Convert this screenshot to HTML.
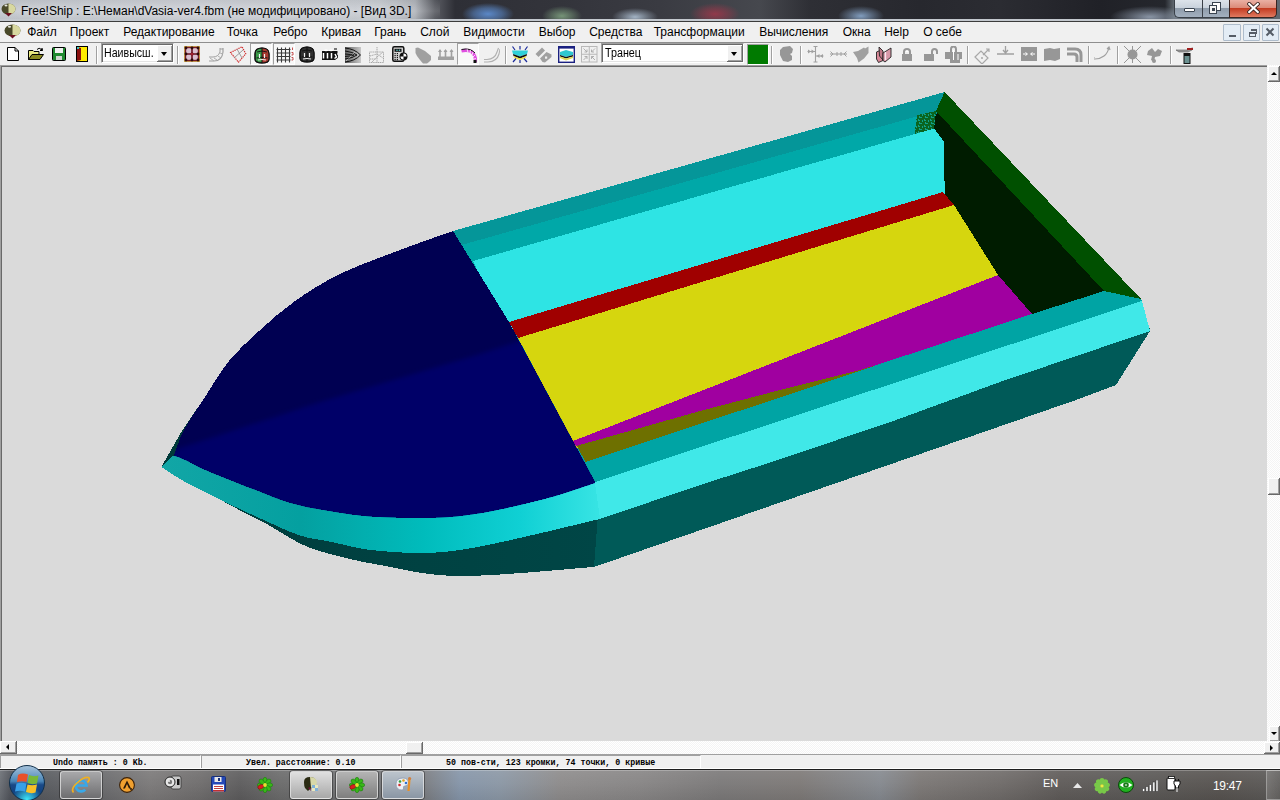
<!DOCTYPE html>
<html><head><meta charset="utf-8">
<style>
*{margin:0;padding:0;box-sizing:border-box}
html,body{width:1280px;height:800px;overflow:hidden;background:#f0f0f0;font-family:"Liberation Sans",sans-serif}
.a{position:absolute}
#title{left:0;top:0;width:1280px;height:22px;background:#2c2d34;overflow:hidden}
#menu{left:0;top:22px;width:1280px;height:21px;background:#f0f0f0;font-size:12px;color:#000}
#menu span{position:absolute;top:3px;white-space:nowrap}
#tb{left:0;top:43px;width:1280px;height:22px;background:#f0f0f0}
#view{left:0;top:65px;width:1267px;height:676px;background:#dadada;border-top:1px solid #a0a0a0;border-left:1px solid #a0a0a0;box-shadow:inset 1px 1px #696969}
#vs{left:1267px;top:65px;width:13px;height:676px;background:#f6f6f6}
#hs{left:0;top:741px;width:1280px;height:13px;background:#f6f6f6}
#status{left:0;top:754px;width:1280px;height:15px;background:#f0f0f0}
#status .p{position:absolute;top:1px;height:13px;border-top:1px solid #a0a0a0;border-left:1px solid #a0a0a0;border-right:1px solid #fff;font-family:"Liberation Mono",monospace;font-size:8.3px;font-weight:bold;color:#000;white-space:nowrap}
#task{left:0;top:769px;width:1280px;height:31px;background:#5e5e60}

</style></head><body>
<div id="title" class="a">
<div class="a" style="left:0;top:0;width:1280px;height:20px;background:linear-gradient(90deg,#c4c8cf 0px,#cdd0d6 200px,#c8ccd2 380px,#b0b4ba 415px,#5a5c63 435px,#2e2f36 455px,#33343b 560px,#3a3b42 660px,#46484e 760px,#2e2f35 810px,#27282e 920px,#2b2c32 1000px,#202127 1100px,#25272d 1165px,#606870 1174px)"></div>
<div class="a" style="left:0;top:0;width:440px;height:20px;background:linear-gradient(180deg,rgba(0,0,0,.05),rgba(255,255,255,.10) 55%,rgba(0,0,0,.04))"></div>
<div class="a" style="left:462px;top:3px;width:52px;height:22px;border-radius:45%;background:radial-gradient(closest-side,rgba(95,145,215,.9),rgba(95,145,215,.5) 55%,rgba(95,145,215,0))"></div>
<div class="a" style="left:542px;top:6px;width:40px;height:20px;border-radius:45%;background:radial-gradient(closest-side,rgba(140,180,140,.75),rgba(140,180,140,.35) 55%,rgba(140,180,140,0))"></div>
<div class="a" style="left:612px;top:8px;width:46px;height:18px;border-radius:45%;background:radial-gradient(closest-side,rgba(190,210,230,.8),rgba(190,210,230,.35) 55%,rgba(190,210,230,0))"></div>
<div class="a" style="left:690px;top:3px;width:50px;height:22px;border-radius:45%;background:radial-gradient(closest-side,rgba(165,55,75,.8),rgba(165,55,75,.4) 55%,rgba(165,55,75,0))"></div>
<div class="a" style="left:838px;top:6px;width:46px;height:20px;border-radius:45%;background:radial-gradient(closest-side,rgba(150,185,225,.8),rgba(150,185,225,.35) 55%,rgba(150,185,225,0))"></div>
<div class="a" style="left:1110px;top:6px;width:80px;height:22px;border-radius:50%;background:radial-gradient(closest-side,rgba(170,185,205,.75),rgba(170,185,205,0))"></div>
<div class="a" style="left:0;top:19px;width:1280px;height:2px;background:#c3c8ce"></div>
<div class="a" style="left:0;top:21px;width:1280px;height:1px;background:#3c3c3c"></div>
<svg class="a" style="left:1px;top:3px" width="15" height="14" viewBox="0 0 15 14"><ellipse cx="7.5" cy="6" rx="7" ry="5.5" fill="#4a4a2a"/><path d="M7.5 0.5 A7 5.5 0 0 1 7.5 11.5 Z" fill="#d8d8a0"/><path d="M4 10 L7.5 13.5 L11 10 Z" fill="#6a1020"/><ellipse cx="5" cy="2.5" rx="1.5" ry="1" fill="#e8e8e0"/></svg>
<div class="a" style="left:20.9px;top:4px;font-size:12px;color:#000;white-space:nowrap;letter-spacing:0px;text-shadow:0 0 8px rgba(255,255,255,.6)">Free!Ship<span style="margin-left:-3.5px">&nbsp; : </span>E:\Неман\dVasia-ver4.fbm (не модифицировано) - [Вид 3D.]</div>
<div class="a" style="left:1174px;top:0;width:28px;height:18px;border:1px solid #3a4048;border-top:none;border-right:none;border-radius:0 0 0 5px;background:linear-gradient(180deg,#dde3ea 0,#c9d2dc 45%,#8f9cab 50%,#a3b0bf 100%)"></div>
<div class="a" style="left:1202px;top:0;width:28px;height:18px;border:1px solid #3a4048;border-top:none;background:linear-gradient(180deg,#dde3ea 0,#c9d2dc 45%,#8f9cab 50%,#a3b0bf 100%)"></div>
<div class="a" style="left:1229px;top:0;width:48px;height:18px;border:1px solid #3a2420;border-top:none;border-radius:0 0 5px 0;background:linear-gradient(180deg,#eab0a4 0,#dc8a78 45%,#c43c22 50%,#e07a60 100%)"></div>
<div class="a" style="left:1184px;top:8px;width:11px;height:4px;background:#fff;border:1px solid #3a4450;border-radius:1px"></div>
<div class="a" style="left:1212px;top:2px;width:9px;height:9px;border:1px solid #3a4450;background:#fff"></div>
<div class="a" style="left:1209px;top:5px;width:8px;height:9px;border:1px solid #3a4450;background:#f4f4f4"></div>
<div class="a" style="left:1212px;top:8px;width:3px;height:3px;background:#3a4450"></div>
<svg class="a" style="left:1247px;top:2px" width="13" height="12" viewBox="0 0 13 12"><path d="M2.2 2 L10.8 10 M10.8 2 L2.2 10" stroke="#3a2420" stroke-width="3.8" stroke-linecap="square"/><path d="M2.2 2 L10.8 10 M10.8 2 L2.2 10" stroke="#fff" stroke-width="2.1" stroke-linecap="square"/></svg>
</div>
<div id="menu" class="a"><span style="left:27.2px">Файл</span><span style="left:69.7px">Проект</span><span style="left:123.2px">Редактирование</span><span style="left:226.7px">Точка</span><span style="left:273.2px">Ребро</span><span style="left:321.2px">Кривая</span><span style="left:374.2px">Грань</span><span style="left:420.2px">Слой</span><span style="left:463.2px">Видимости</span><span style="left:538.7px">Выбор</span><span style="left:589.2px">Средства</span><span style="left:653.7px">Трансформации</span><span style="left:759.2px">Вычисления</span><span style="left:842.7px">Окна</span><span style="left:884.2px">Help</span><span style="left:923.2px">О себе</span><svg class="a" style="left:4px;top:2px" width="17" height="15" viewBox="0 0 17 15"><ellipse cx="8.5" cy="6.5" rx="8" ry="6" fill="#4a4a2a"/><path d="M8.5 0.5 A8 6 0 0 1 8.5 12.5 Z" fill="#d8d8a0"/><path d="M5 11 L8.5 14.5 L12 11 Z" fill="#6a1020"/><ellipse cx="5.5" cy="2.8" rx="1.6" ry="1" fill="#e8e8e0"/></svg><div class="a" style="left:1223px;top:1.5px;width:17.5px;height:17px;background:#e3ecf5;border:1px solid #aebccb;border-radius:1px"><div class="a" style="left:5px;top:10px;width:7px;height:2px;background:#555c66"></div></div><div class="a" style="left:1242.5px;top:1.5px;width:17.5px;height:17px;background:#e3ecf5;border:1px solid #aebccb;border-radius:1px"><div class="a" style="left:5px;top:7px;width:7px;height:5px;border:2px solid #555c66;border-width:2px 1px 1px 1px"></div><div class="a" style="left:7px;top:4px;width:6px;height:5px;border:1px solid #555c66;border-top-width:2px;border-left:none;border-bottom:none"></div></div><div class="a" style="left:1261.5px;top:1.5px;width:17.5px;height:17px;background:#e3ecf5;border:1px solid #aebccb;border-radius:1px"></div><svg class="a" style="left:1265px;top:5px" width="10" height="10" viewBox="0 0 10 10"><path d="M1.5 1.5 L8.5 8.5 M8.5 1.5 L1.5 8.5" stroke="#555c66" stroke-width="2"/></svg><div class="a" style="left:0;top:19.5px;width:1280px;height:1.5px;background:#8e8e8e"></div></div>
<div id="tb" class="a"><div class="a" style="left:250px;top:0;width:22px;height:22px;background:#f8f8f8;border-left:1px solid #a0a0a0;border-top:1px solid #a0a0a0;border-right:1px solid #fff;border-bottom:1px solid #fff"></div><div class="a" style="left:272.5px;top:0;width:22px;height:22px;background:#f8f8f8;border-left:1px solid #a0a0a0;border-top:1px solid #a0a0a0;border-right:1px solid #fff;border-bottom:1px solid #fff"></div><div class="a" style="left:457px;top:0;width:22px;height:22px;background:#f8f8f8;border-left:1px solid #a0a0a0;border-top:1px solid #a0a0a0;border-right:1px solid #fff;border-bottom:1px solid #fff"></div><svg class="a" style="left:7px;top:4px" width="12" height="14" viewBox="0 0 12 14"><path d="M0.5 0.5 H8 L11.5 4 V13.5 H0.5 Z" fill="#fff" stroke="#000"/><path d="M8 0.5 V4 H11.5" fill="none" stroke="#000"/></svg><svg class="a" style="left:28px;top:4px" width="16" height="13" viewBox="0 0 16 13"><path d="M0.5 3.5 H5 L6 4.5 H11 V12.5 H0.5 Z" fill="#e8e880" stroke="#000"/><path d="M0.5 12.5 L4 7.5 H15.5 L12 12.5 Z" fill="#8a8a20" stroke="#000"/><path d="M9 2.5 Q11 0 13.5 2.5" fill="none" stroke="#000"/><path d="M12 3.5 L14.5 3.5 L14 1" fill="#000" stroke="#000"/></svg><svg class="a" style="left:52px;top:4px" width="14" height="14" viewBox="0 0 14 14"><rect x="0.5" y="0.5" width="13" height="13" rx="1" fill="#208a30" stroke="#000"/><rect x="3" y="1" width="8" height="5" fill="#f0f0f0"/><rect x="4" y="9" width="6" height="4" fill="#d0d8d0"/></svg><svg class="a" style="left:76px;top:3px" width="12" height="16" viewBox="0 0 12 16"><rect x="0.5" y="0.5" width="11" height="15" fill="#ffea00" stroke="#000"/><path d="M1 1 L5 2 V14 L1 15 Z" fill="#8a1010"/><rect x="1" y="1" width="2" height="2" fill="#40c0c0"/></svg><svg class="a" style="left:184px;top:3px" width="16" height="16" viewBox="0 0 16 16"><rect x="0.5" y="0.5" width="15" height="15" fill="#d8c0d0" stroke="#d0b050"/><path d="M8 1 V15 M1 8 H15" stroke="#6a1020" stroke-width="1.6"/><rect x="1.5" y="1.5" width="13" height="13" fill="none" stroke="#7a1a28" stroke-width="1.4"/><circle cx="2" cy="2" r="1.4" fill="#2a0a0a"/><circle cx="2" cy="8" r="1.4" fill="#2a0a0a"/><circle cx="2" cy="14" r="1.4" fill="#2a0a0a"/><circle cx="8" cy="2" r="1.4" fill="#2a0a0a"/><circle cx="8" cy="8" r="1.4" fill="#2a0a0a"/><circle cx="8" cy="14" r="1.4" fill="#2a0a0a"/><circle cx="14" cy="2" r="1.4" fill="#2a0a0a"/><circle cx="14" cy="8" r="1.4" fill="#2a0a0a"/><circle cx="14" cy="14" r="1.4" fill="#2a0a0a"/><circle cx="8" cy="8" r="1.6" fill="#a02030"/></svg><svg class="a" style="left:208px;top:4px" width="16" height="15" viewBox="0 0 16 15"><path d="M1 10 H5 Q10 10 12 5 V1" fill="none" stroke="#a0a0a0" stroke-width="1"/><path d="M1 14 H6 Q14 14 15 5 V1 M12 2 H15" fill="none" stroke="#a0a0a0" stroke-width="1.2"/><path d="M2 11 L6 14 M6 11 L9 13 M10 9 L13 11 M12 6 L15 7" stroke="#b0b0b0"/></svg><svg class="a" style="left:229px;top:3px" width="18" height="17" viewBox="0 0 18 17"><path d="M1.5 6.5 L13 0.8 L16.8 7.8 L9.5 16.2 Z" fill="none" stroke="#d02828" stroke-width="1.1" stroke-dasharray="1.4 .8"/><path d="M5 12 L14 4 M8 3 L13 12" stroke="#909090" stroke-width=".9"/></svg><svg class="a" style="left:254px;top:4px" width="16" height="17" viewBox="0 0 16 17"><path d="M1 7 Q1 1 8 1 Q15 1 15 7 V12 Q15 16 8 16 Q1 16 1 12 Z" fill="#3a9a48" stroke="#111" stroke-width="1.1"/><path d="M8 1 Q15 1 15 7 V12 Q15 16 8 16 Z" fill="#a83a30"/><path d="M1 7 Q1 1 8 1 Q15 1 15 7 V12 Q15 16 8 16 Q1 16 1 12 Z" fill="none" stroke="#111" stroke-width="1.1"/><path d="M3 5 Q8 3 13 5 M2.5 11 Q8 9.5 13.5 11 M8 1 V16" stroke="#111" stroke-width=".9" fill="none"/><path d="M5.5 7 V11 M10.5 7 V11 M4 13 Q8 12 12 13" stroke="#f0f0f0" stroke-width="1.2" fill="none"/></svg><svg class="a" style="left:276px;top:4px" width="18" height="16" viewBox="0 0 18 16"><path d="M1.5 0.5 V15.5 M5.5 0.5 V15.5 M9.5 0.5 V15.5 M13.5 0.5 V15.5 M0.5 2.5 H14.5 M0.5 6 H14.5 M0.5 9.5 H14.5 M0.5 13 H14.5" stroke="#3a3a3a" stroke-width="1.1"/><path d="M16.5 0.5 V3 M15.5 5.5 H17 V8 H15.5 M15.5 10.5 H17 M17 10.5 V13 H15.5" stroke="#c04040" stroke-width=".9" fill="none"/></svg><svg class="a" style="left:299px;top:3px" width="16" height="17" viewBox="0 0 16 17"><path d="M1 7 Q1 1 8 1 Q15 1 15 7 V12 Q15 16 8 16 Q1 16 1 12 Z" fill="#303030" stroke="#111" stroke-width="1.1"/><path d="M8 1 Q15 1 15 7 V12 Q15 16 8 16 Z" fill="#303030"/><path d="M1 7 Q1 1 8 1 Q15 1 15 7 V12 Q15 16 8 16 Q1 16 1 12 Z" fill="none" stroke="#111" stroke-width="1.1"/><path d="M3 5 Q8 3 13 5 M2.5 11 Q8 9.5 13.5 11 M8 1 V16" stroke="#111" stroke-width=".9" fill="none"/><path d="M5.5 7 V11 M10.5 7 V11 M4 13 Q8 12 12 13" stroke="#f0f0f0" stroke-width="1.2" fill="none"/></svg><svg class="a" style="left:322px;top:5px" width="16" height="12" viewBox="0 0 16 12"><path d="M0 3 H15.5 V5 L15 6 L17 9 L13 12 H0 Z" fill="#111"/><ellipse cx="4" cy="2.3" rx="2.2" ry="0.9" fill="#fff"/><ellipse cx="9" cy="2.3" rx="2.2" ry="0.9" fill="#fff"/><rect x="12" y="0" width="3" height="2" fill="#777"/><path d="M1.5 5 V10.5 M5.5 5 V10.5 M9.5 5 V10.5 M13 6 L14.5 9 L12.5 10.5" stroke="#fff" stroke-width="1.5" fill="none"/></svg><svg class="a" style="left:345px;top:3.5px" width="16" height="16" viewBox="0 0 16 16"><defs><linearGradient id="gg1" x1="0" x2="1"><stop offset="0" stop-color="#606060"/><stop offset="1" stop-color="#c8c8c8"/></linearGradient></defs><rect width="16" height="16" fill="url(#gg1)"/><path d="M0 1 Q10 2 15.5 8 Q10 14 0 15 M0 4 Q8 5 12 8 Q8 11 0 12 M0 7 Q6 7.5 9 8 Q6 9 0 9.5" fill="none" stroke="#111" stroke-width="1"/><path d="M1 14 L10 5" stroke="#eee" stroke-width=".8" stroke-dasharray="1 1"/></svg><svg class="a" style="left:369px;top:4px" width="15" height="16" viewBox="0 0 15 16"><path d="M0.5 5 H14.5 V15.5 H0.5 Z M8 0 V15.5 M1 9 L8 7 L14 11 M3 15 L8 10 L14 5 M1 12 H7" fill="none" stroke="#a8a8a8" stroke-width="1" stroke-dasharray="1.2 .6"/></svg><svg class="a" style="left:392px;top:3px" width="16" height="16" viewBox="0 0 16 16"><rect x="0.8" y="0.8" width="11" height="14.4" rx="1.5" fill="#d4d4d4" stroke="#111" stroke-width="1.5"/><rect x="2.5" y="2.8" width="7" height="3" fill="#111"/><circle cx="5" cy="4.3" r=".8" fill="#5ac8c8"/><circle cx="7.5" cy="4.3" r=".8" fill="#5ac8c8"/><rect x="2.5" y="7" width="1.2" height="1.2" fill="#111"/><rect x="2.5" y="9" width="1.2" height="1.2" fill="#111"/><rect x="2.5" y="11" width="1.2" height="1.2" fill="#111"/><rect x="2.5" y="13" width="1.2" height="1.2" fill="#111"/><rect x="4.8" y="7" width="1.2" height="1.2" fill="#111"/><rect x="4.8" y="9" width="1.2" height="1.2" fill="#111"/><rect x="4.8" y="11" width="1.2" height="1.2" fill="#111"/><rect x="4.8" y="13" width="1.2" height="1.2" fill="#111"/><circle cx="11.5" cy="10.5" r="4" fill="#111"/><path d="M11.5 7.5 A3 3 0 0 1 14.5 10.5 H11.5 Z M11.5 10.5 V13.5 A3 3 0 0 1 8.5 10.5 Z" fill="#fff"/></svg><svg class="a" style="left:415px;top:4px" width="17" height="17" viewBox="0 0 17 17"><path d="M0.5 1 L3 0.5 L6 2 L10 4 L13 6.5 L16 9 L16 13 L14 15 L12 16.5 L8 16.5 L5 13 L2 9 L0.5 6 Z" fill="#a0a0a0"/></svg><svg class="a" style="left:438px;top:6px" width="16" height="11" viewBox="0 0 16 11"><rect x="0" y="7.5" width="16" height="3.5" fill="#a0a0a0"/><path d="M2 1 V8 M7.5 1 V8 M13.5 1 V8" stroke="#a0a0a0" stroke-width="1.6"/><path d="M0 3 L2 0 L4 3 Z M5.5 3 L7.5 0 L9.5 3 Z M11.5 3 L13.5 0 L15.5 3 Z" fill="#a0a0a0"/></svg><svg class="a" style="left:461px;top:5px" width="16" height="15" viewBox="0 0 16 15"><path d="M0.5 3 Q9 1 12.5 6 Q15 9 14.5 14" fill="none" stroke="#e050e0" stroke-width="3.2"/><path d="M0.5 1.5 Q9 -0.5 14 5" fill="none" stroke="#111" stroke-width="1"/><path d="M6 1 L7 4.5 M9.5 2 L9 5.5 M12 4 L11 7 M14 7 L12 9 M15 10.5 L13 11" stroke="#fff" stroke-width=".8"/><rect x="12.5" y="12" width="3" height="3" fill="#111"/></svg><svg class="a" style="left:483px;top:4px" width="17" height="16" viewBox="0 0 17 16"><path d="M1 12.5 H4 Q12 12 14 5 L15.5 1 M1 15 H5 Q14 14.5 16 7 L17 2" fill="none" stroke="#b0b0b0" stroke-width="1.1"/></svg><svg class="a" style="left:511px;top:3px" width="18" height="17" viewBox="0 0 18 17"><path d="M1 4.5 L17 4.5 L16 8 L9 10.5 L2 8 Z" fill="#30d0d8"/><path d="M2 8 L9 10.5 L16 8 L15.5 10 L9 12.5 L2.5 10 Z" fill="#111"/><path d="M2.5 10 L9 12.5 L15.5 10 L14.5 12 L9 14 L3.5 12 Z" fill="#f0e040"/><path d="M1.5 0.5 L4 4 M16.5 0.5 L14 4 M9 0 V3.5 M2 16 L5 12.5 M16 16 L13 12.5 M9 14 V17" stroke="#1a2a9a" stroke-width="1.2"/></svg><svg class="a" style="left:535px;top:3px" width="17" height="17" viewBox="0 0 17 17"><path d="M0.5 8 L7 1.5 L10 4.5 L3.5 11 Z" fill="#a0a0a0"/><path d="M5 12.5 L11.5 6 L16.5 8.5 V11 L10 16.5 L7.5 16 Z" fill="#a0a0a0"/><rect x="10" y="10.5" width="2.2" height="2.2" fill="#f0f0f0"/></svg><svg class="a" style="left:558px;top:3px" width="17" height="17" viewBox="0 0 17 17"><rect x="0.7" y="0.7" width="15.6" height="15.6" fill="#fff" stroke="#1a2080" stroke-width="1.4"/><rect x="1" y="1" width="15" height="1.6" fill="#1a2080"/><path d="M2 6 L8 4 L15 6 V9 L8 11 L2 9 Z" fill="#30c8d0"/><path d="M2 9 L8 11 L15 9 V10.5 L8 12.5 L2 10.5 Z" fill="#111"/><path d="M2 10.5 L8 12.5 L15 10.5 V12 L8 14.5 L2 12 Z" fill="#e0d850"/></svg><svg class="a" style="left:581px;top:3px" width="17" height="17" viewBox="0 0 17 17"><rect x="0.5" y="0.5" width="15.5" height="15.5" fill="none" stroke="#b8b8b8"/><path d="M8.25 0.5 V16 M0.5 8.25 H16" stroke="#b8b8b8"/><path d="M2.5 2.5 L6 6 M6 3.5 V6 H3.5 M14 2.5 L10.5 6 M10.5 3.5 V6 H13 M2.5 14 L6 10.5 M3.5 10.5 H6 V13 M14 14 L10.5 10.5 M13 10.5 H10.5 V13" stroke="#a8a8a8" fill="none" stroke-width=".9"/></svg><svg class="a" style="left:779px;top:3px" width="15" height="16" viewBox="0 0 15 16"><path d="M4 1 L11 0 L14 3 L13 7 L11 8 L13 10 L13 14 L9 16 L4 15 L1 9 L1 4 Z" fill="#979797"/></svg><svg class="a" style="left:807px;top:3px" width="17" height="17" viewBox="0 0 17 17"><path d="M8.5 0.5 V16 M6.5 0.5 H10.5 M6.5 16 H10.5 M0.5 5.5 H8.5 M8.5 10 H16.5" stroke="#a0a0a0" stroke-width="1.1" fill="none"/><path d="M1 3.5 L4 5.5 L1 7.5 Z M4.5 3.5 L7.5 5.5 L4.5 7.5 Z M16 8 L13 10 L16 12 Z M12.5 8 L9.5 10 L12.5 12 Z" fill="#a0a0a0"/></svg><svg class="a" style="left:830px;top:8px" width="17" height="6" viewBox="0 0 17 6"><path d="M0 3 H17" stroke="#a0a0a0" stroke-width="1.1"/><path d="M0.5 0.5 L3 3 L0.5 5.5 M16.5 0.5 L14 3 L16.5 5.5 M7 1 V5 M11 1 V5" stroke="#a0a0a0" stroke-width="1" fill="none"/></svg><svg class="a" style="left:853px;top:3px" width="17" height="17" viewBox="0 0 17 17"><path d="M0 6 L5 5 L11 1.5 L12 2.5 L15.5 0.5 L15.5 7 L11 12.5 L5.5 16.5 L4 12 Z" fill="#a0a0a0"/></svg><svg class="a" style="left:876px;top:3px" width="16" height="17" viewBox="0 0 16 17"><path d="M0.5 6 L5 4 L7 7 L7 14.5 L2.5 16.5 L0.5 13 Z" fill="#d88898" stroke="#222" stroke-width=".9"/><path d="M3 1 L7 5 L7 14 L3.5 10 Z" fill="#c07888" stroke="#222" stroke-width=".9"/><path d="M7 7 L15 2 L15 11 L9 16 L7 14.5 Z" fill="#d898a8" stroke="#222" stroke-width=".9"/><path d="M9.5 6 V14" stroke="#f8e8f0" stroke-width="1.3"/></svg><svg class="a" style="left:902px;top:5px" width="10" height="13" viewBox="0 0 10 13"><path d="M2 6 V3.5 Q2 1 5 1 Q8 1 8 3.5 V6" fill="none" stroke="#979797" stroke-width="2"/><rect x="0" y="6" width="10" height="7" fill="#979797"/><path d="M5 2 L3.5 4 H6.5 Z" fill="#fff"/></svg><svg class="a" style="left:924px;top:5px" width="14" height="13" viewBox="0 0 14 13"><path d="M8 6 V3.5 Q8 1 10.5 1 Q13 1 13 3.5 V6" fill="none" stroke="#979797" stroke-width="2"/><rect x="0" y="6" width="10" height="7" fill="#979797"/></svg><svg class="a" style="left:945px;top:3px" width="17" height="17" viewBox="0 0 17 17"><path d="M6 6 V3 Q6 0.5 8.5 0.5 Q11 0.5 11 3 V6" fill="none" stroke="#979797" stroke-width="2"/><rect x="0" y="6" width="17" height="7" fill="#979797"/><rect x="5" y="10" width="10" height="7" fill="#979797"/><path d="M8.5 4 V14 M13 8 V14" stroke="#fff"/></svg><svg class="a" style="left:974px;top:4px" width="16" height="17" viewBox="0 0 16 17"><path d="M1 10 L7 4 L14 11 L8 17 Z" fill="none" stroke="#a8a8a8" stroke-width="1.2"/><path d="M9 8 L15 2 M12 2 H15 V5" stroke="#a8a8a8" stroke-width="1.2" fill="none"/><path d="M7 11 h2 M8 10 v2" stroke="#a8a8a8"/></svg><svg class="a" style="left:997px;top:3px" width="17" height="10" viewBox="0 0 17 10"><path d="M0 8 H17 M8.5 0 V7 M6 4 L8.5 7 L11 4" stroke="#a0a0a0" stroke-width="1.3" fill="none"/></svg><svg class="a" style="left:1021px;top:4px" width="16" height="14" viewBox="0 0 16 14"><rect width="16" height="14" fill="#979797"/><path d="M2 7 H6 M4.5 5.5 L6.5 7 L4.5 8.5 M14 7 H10 M11.5 5.5 L9.5 7 L11.5 8.5" stroke="#fff" stroke-width="1" fill="none"/></svg><svg class="a" style="left:1044px;top:4px" width="16" height="14" viewBox="0 0 16 14"><path d="M0 2 L6 1 L10 2 L16 1 V12 L11 14 L6 13 L0 14 Z" fill="#979797"/></svg><svg class="a" style="left:1066px;top:3px" width="17" height="16" viewBox="0 0 17 16"><path d="M1 3 H9 Q15 3 15 9 V16 M1 8 H8 Q11 8 11 11 V16" fill="none" stroke="#979797" stroke-width="3"/></svg><svg class="a" style="left:1094px;top:3px" width="17" height="14" viewBox="0 0 17 14"><path d="M1 13 Q6 13 10 10 Q14 7 15 1 M13 3 L15 1 L16 4" fill="none" stroke="#a0a0a0" stroke-width="1.2"/><path d="M0 11 V14" stroke="#a0a0a0"/></svg><svg class="a" style="left:1124px;top:3px" width="17" height="17" viewBox="0 0 17 17"><path d="M0 0 L17 17 M17 0 L0 17 M8.5 0 V4 M8.5 13 V17" stroke="#979797" stroke-width="1"/><circle cx="8.5" cy="8.5" r="5" fill="#979797"/></svg><svg class="a" style="left:1146px;top:3px" width="17" height="17" viewBox="0 0 17 17"><path d="M2 5 L6 2 L9 6 L12 3 L16 5 L14 10 L9 11 L8 16 L5 14 L6 10 L1 9 Z" fill="#979797"/><circle cx="8" cy="15" r="2" fill="#979797"/></svg><svg class="a" style="left:1176px;top:4px" width="17" height="17" viewBox="0 0 17 17"><path d="M0 3 H12 L16 1 H17 L16 3 L12 5 H3 Z" fill="#a0a0a0" stroke="#555" stroke-width=".6"/><rect x="11" y="1" width="6" height="2" fill="#a02020"/><rect x="7.5" y="6" width="7" height="11" fill="#111"/><rect x="8.5" y="9" width="5" height="7" fill="#6a9090"/></svg><div class="a" style="left:96px;top:3px;width:1px;height:18px;background:#a0a0a0"></div><div class="a" style="left:97px;top:3px;width:1px;height:18px;background:#fff"></div><div class="a" style="left:177px;top:3px;width:1px;height:18px;background:#a0a0a0"></div><div class="a" style="left:178px;top:3px;width:1px;height:18px;background:#fff"></div><div class="a" style="left:505px;top:3px;width:1px;height:18px;background:#a0a0a0"></div><div class="a" style="left:506px;top:3px;width:1px;height:18px;background:#fff"></div><div class="a" style="left:771px;top:3px;width:1px;height:18px;background:#a0a0a0"></div><div class="a" style="left:772px;top:3px;width:1px;height:18px;background:#fff"></div><div class="a" style="left:800px;top:3px;width:1px;height:18px;background:#a0a0a0"></div><div class="a" style="left:801px;top:3px;width:1px;height:18px;background:#fff"></div><div class="a" style="left:967px;top:3px;width:1px;height:18px;background:#a0a0a0"></div><div class="a" style="left:968px;top:3px;width:1px;height:18px;background:#fff"></div><div class="a" style="left:1088px;top:3px;width:1px;height:18px;background:#a0a0a0"></div><div class="a" style="left:1089px;top:3px;width:1px;height:18px;background:#fff"></div><div class="a" style="left:1117px;top:3px;width:1px;height:18px;background:#a0a0a0"></div><div class="a" style="left:1118px;top:3px;width:1px;height:18px;background:#fff"></div><div class="a" style="left:1170px;top:3px;width:1px;height:18px;background:#a0a0a0"></div><div class="a" style="left:1171px;top:3px;width:1px;height:18px;background:#fff"></div><div class="a" style="left:100.5px;top:0px;width:73.5px;height:20px;background:#fff;border-top:1px solid #a0a0a0;border-left:1px solid #a0a0a0;border-right:1px solid #fff;border-bottom:1px solid #fff;box-shadow:inset 1px 1px #696969,inset -1px -1px #e3e3e3"><span class="a" style="left:2.5px;top:2px;font-size:12.5px;white-space:nowrap;transform:scaleX(0.85);transform-origin:0 0">Наивысш.</span><div class="a" style="left:55.0px;top:1px;width:16.5px;height:17px;background:#f0f0f0;border-right:1px solid #696969;border-bottom:1px solid #696969;box-shadow:inset 1px 1px #fff,inset -1px -1px #a0a0a0"></div><div class="a" style="left:59.5px;top:8px;width:0;height:0;border-left:3.5px solid transparent;border-right:3.5px solid transparent;border-top:4px solid #000"></div></div><div class="a" style="left:601px;top:0px;width:143px;height:20px;background:#fff;border-top:1px solid #a0a0a0;border-left:1px solid #a0a0a0;border-right:1px solid #fff;border-bottom:1px solid #fff;box-shadow:inset 1px 1px #696969,inset -1px -1px #e3e3e3"><span class="a" style="left:2.5px;top:2px;font-size:12.5px;white-space:nowrap;transform:scaleX(0.86);transform-origin:0 0">Транец</span><div class="a" style="left:124.5px;top:1px;width:16.5px;height:17px;background:#f0f0f0;border-right:1px solid #696969;border-bottom:1px solid #696969;box-shadow:inset 1px 1px #fff,inset -1px -1px #a0a0a0"></div><div class="a" style="left:129px;top:8px;width:0;height:0;border-left:3.5px solid transparent;border-right:3.5px solid transparent;border-top:4px solid #000"></div></div><div class="a" style="left:746.5px;top:0.5px;width:22px;height:21px;background:#007a00;border:1px solid #a0a0a0;border-right-color:#fff;border-bottom-color:#fff"></div></div>
<div id="view" class="a"></div>
<svg class="a" style="left:0;top:0" width="1280" height="800" viewBox="0 0 1280 800" shape-rendering="crispEdges">
<defs>
<linearGradient id="gband" gradientUnits="userSpaceOnUse" x1="160" y1="0" x2="600" y2="0">
<stop offset="0" stop-color="#12a6a6"/><stop offset="0.32" stop-color="#04a0a0"/><stop offset="0.6" stop-color="#00bcbc"/><stop offset="0.82" stop-color="#10d0d4"/><stop offset="1" stop-color="#38e4e4"/></linearGradient>
<linearGradient id="ghull" gradientUnits="userSpaceOnUse" x1="160" y1="0" x2="600" y2="0">
<stop offset="0" stop-color="#003c3c"/><stop offset="1" stop-color="#004646"/></linearGradient>
<clipPath id="cdeck"><path d="M174.0,455.5 C175.7,451.2 178.8,439.8 184.0,430.0 C189.2,420.2 197.5,408.5 205.0,397.0 C212.5,385.5 220.0,372.0 229.0,361.0 C238.0,350.0 248.0,341.0 259.0,331.0 C270.0,321.0 281.5,310.5 295.0,301.0 C308.5,291.5 322.5,282.5 340.0,274.0 C357.5,265.5 381.2,257.2 400.0,250.0 C418.8,242.8 444.2,234.2 453.0,231.0 L509.0,322.0 L595.0,482.0 L595.0,483.0 C585.8,485.8 562.5,494.5 540.0,500.0 C517.5,505.5 486.7,513.2 460.0,516.0 C433.3,518.8 401.7,517.8 380.0,517.0 C358.3,516.2 344.8,513.3 330.0,511.0 C315.2,508.7 303.3,506.5 291.0,503.0 C278.7,499.5 264.5,493.2 256.0,490.0 C247.5,486.8 248.5,487.4 240.0,484.0 C231.5,480.6 214.1,473.8 205.0,469.8 C195.9,465.8 190.7,462.4 185.5,460.0 C180.3,457.6 175.9,456.2 174.0,455.5 Z"/></clipPath>
<pattern id="mesh" patternUnits="userSpaceOnUse" width="6" height="6"><rect width="6" height="6" fill="#0a6420"/><rect x="0" y="0" width="1" height="1" fill="#10a088"/><rect x="0" y="5" width="1" height="1" fill="#10a088"/><rect x="1" y="0" width="1" height="1" fill="#10a088"/><rect x="1" y="2" width="1" height="1" fill="#10a088"/><rect x="1" y="3" width="1" height="1" fill="#10a088"/><rect x="2" y="3" width="1" height="1" fill="#10a088"/><rect x="3" y="3" width="1" height="1" fill="#10a088"/><rect x="4" y="0" width="1" height="1" fill="#10a088"/><rect x="4" y="1" width="1" height="1" fill="#10a088"/></pattern>
<filter id="bl" x="-10%" y="-10%" width="120%" height="120%"><feGaussianBlur stdDeviation="2"/></filter>
</defs>
<path fill="url(#ghull)" d="M161.5,467.0 C172.9,473.3 212.8,495.7 230.0,505.0 C247.2,514.3 253.3,516.6 265.0,523.0 C276.7,529.4 289.2,538.2 300.0,543.4 C310.8,548.6 316.7,550.4 330.0,554.0 C343.3,557.6 358.3,561.3 380.0,565.0 C401.7,568.7 424.3,575.7 460.0,576.0 C495.7,576.3 571.7,568.5 594.0,567.0 L1076.0,400.0 L1116.0,385.0 L1150.0,331.0 L1000.0,372.0 L600.0,510.0 C576.7,515.8 496.7,539.0 460.0,545.0 C423.3,551.0 401.7,547.3 380.0,546.0 C358.3,544.7 343.3,539.7 330.0,537.0 C316.7,534.3 310.8,533.5 300.0,530.0 C289.2,526.5 276.7,521.0 265.0,516.0 C253.3,511.0 240.7,505.0 230.0,500.0 C219.3,495.0 209.3,490.0 201.0,486.0 C192.7,482.0 186.6,479.2 180.0,476.0 C173.4,472.8 164.6,468.5 161.5,467.0 Z"/>
<polygon fill="#005a58" points="598.0,515.0 1150.0,328.0 1150.0,331.0 1116.0,385.0 1076.0,400.0 594.0,567.0"/>
<polygon fill="#003a3a" points="161,467.5 182.5,430 205,397 206,397 184,430 174,455.5"/>
<polygon fill="#40e8e8" points="590.0,478.0 1141.0,298.5 1142.0,301.0 1150.0,331.0 1000.0,382.0 896.0,420.0 778.0,460.0 700.0,485.0 600.0,519.0"/>
<path fill="url(#gband)" d="M173.0,456.0 L174.0,455.5 C175.9,456.2 180.3,457.6 185.5,460.0 C190.7,462.4 195.9,465.8 205.0,469.8 C214.1,473.8 231.5,480.6 240.0,484.0 C248.5,487.4 247.5,486.8 256.0,490.0 C264.5,493.2 278.7,499.5 291.0,503.0 C303.3,506.5 315.2,508.7 330.0,511.0 C344.8,513.3 358.3,516.2 380.0,517.0 C401.7,517.8 433.3,518.8 460.0,516.0 C486.7,513.2 517.5,505.5 540.0,500.0 C562.5,494.5 585.8,485.8 595.0,483.0 L600.0,519.0 C576.7,524.2 496.7,544.7 460.0,550.0 C423.3,555.3 401.7,552.4 380.0,551.0 C358.3,549.6 343.3,544.2 330.0,541.6 C316.7,539.0 310.8,539.0 300.0,535.5 C289.2,532.0 276.7,525.8 265.0,520.6 C253.3,515.4 240.7,509.5 230.0,504.4 C219.3,499.3 209.3,494.2 201.0,490.0 C192.7,485.8 186.6,482.8 180.0,479.0 C173.4,475.2 164.6,469.0 161.5,467.0 Z"/>
<polygon fill="#00a4a4" points="453.0,231.0 944.6,92.0 1141.0,299.0 1142.0,301.0 595.0,482.0 509.0,322.0"/>
<polygon fill="#001c00" points="936.0,111.0 1104.0,291.0 1030.0,318.0 990.0,280.0 945.0,205.0 935.0,140.0 930.0,125.0"/>
<polygon fill="#059699" points="447.0,233.0 944.6,92.0 936.0,115.0 455.0,255.0"/>
<polygon fill="#00a8a8" points="458.0,246.0 936.0,111.0 934.0,130.0 915.0,136.0 465.0,270.0"/>
<polygon fill="url(#mesh)" points="917,115 936,111 934,128 933.75,128.5 914.6,134.5"/>
<polygon fill="#2ee4e4" points="473.0,261.0 915.0,134.0 934.0,128.5 943.5,141.0 945.0,200.0 515.0,335.0 505.0,330.0"/>
<polygon fill="#a00000" points="509.0,322.0 943.0,192.0 954.0,205.0 960.0,215.0 522.0,345.0"/>
<polygon fill="#d6d60e" points="518.0,338.0 954.0,205.0 998.0,275.0 1003.0,283.0 575.0,449.0 573.0,441.0"/>
<polygon fill="#6e7000" points="574.0,441.0 700.0,405.0 880.0,360.0 885.0,362.0 590.0,470.0"/>
<polygon fill="#00a4a4" points="585.0,462.0 1032.0,314.0 1104.0,291.0 1141.0,299.0 1142.0,301.0 595.0,482.0 590.0,478.0"/>
<polygon fill="#a000a0" points="573.0,441.0 998.0,275.0 1032.0,314.0 875.0,365.5 860.0,370.0 780.0,390.0 700.0,411.0 640.0,428.0 576.0,446.0"/>
<polygon fill="#005000" points="944.6,92 1141,299 1104,291 936,111"/>
<path fill="#000052" d="M174.0,455.5 C175.7,451.2 178.8,439.8 184.0,430.0 C189.2,420.2 197.5,408.5 205.0,397.0 C212.5,385.5 220.0,372.0 229.0,361.0 C238.0,350.0 248.0,341.0 259.0,331.0 C270.0,321.0 281.5,310.5 295.0,301.0 C308.5,291.5 322.5,282.5 340.0,274.0 C357.5,265.5 381.2,257.2 400.0,250.0 C418.8,242.8 444.2,234.2 453.0,231.0 L509.0,322.0 L595.0,482.0 L595.0,483.0 C585.8,485.8 562.5,494.5 540.0,500.0 C517.5,505.5 486.7,513.2 460.0,516.0 C433.3,518.8 401.7,517.8 380.0,517.0 C358.3,516.2 344.8,513.3 330.0,511.0 C315.2,508.7 303.3,506.5 291.0,503.0 C278.7,499.5 264.5,493.2 256.0,490.0 C247.5,486.8 248.5,487.4 240.0,484.0 C231.5,480.6 214.1,473.8 205.0,469.8 C195.9,465.8 190.7,462.4 185.5,460.0 C180.3,457.6 175.9,456.2 174.0,455.5 Z"/>
<g clip-path="url(#cdeck)" shape-rendering="auto"><polygon filter="url(#bl)" fill="#000068" points="150,458 320,402 480,354 540,334 620,500 150,560"/></g>
</svg>
<div id="vs" class="a" style="background-color:#f4f4f4;background-image:linear-gradient(45deg,#fff 25%,transparent 25%,transparent 75%,#fff 75%),linear-gradient(45deg,#fff 25%,transparent 25%,transparent 75%,#fff 75%);background-size:2px 2px;background-position:0 0,1px 1px"><div class="a" style="left:1px;top:1px;width:12px;height:16px;background:#f0f0f0;border-right:1px solid #696969;border-bottom:1px solid #696969;box-shadow:inset 1px 1px #fff,inset -1px -1px #a0a0a0"><div class="a" style="left:3px;top:6px;border-left:3px solid transparent;border-right:3px solid transparent;border-bottom:3px solid #000"></div></div><div class="a" style="left:1px;top:413px;width:12px;height:17px;background:#f0f0f0;border-right:1px solid #696969;border-bottom:1px solid #696969;box-shadow:inset 1px 1px #fff,inset -1px -1px #a0a0a0"></div><div class="a" style="left:1.5px;top:660.5px;width:11px;height:16px;background:#f0f0f0;border-right:1px solid #696969;border-bottom:1px solid #696969;box-shadow:inset 1px 1px #fff,inset -1px -1px #a0a0a0"><div class="a" style="left:2.5px;top:6px;border-left:3px solid transparent;border-right:3px solid transparent;border-top:3px solid #000"></div></div></div>
<div id="hs" class="a" style="background-color:#f4f4f4;background-image:linear-gradient(45deg,#fff 25%,transparent 25%,transparent 75%,#fff 75%),linear-gradient(45deg,#fff 25%,transparent 25%,transparent 75%,#fff 75%);background-size:2px 2px;background-position:0 0,1px 1px"><div class="a" style="left:0px;top:0px;width:17px;height:13px;background:#f0f0f0;border-right:1px solid #696969;border-bottom:1px solid #696969;box-shadow:inset 1px 1px #fff,inset -1px -1px #a0a0a0"><div class="a" style="left:6px;top:3px;border-top:3px solid transparent;border-bottom:3px solid transparent;border-right:3px solid #000"></div></div><div class="a" style="left:406px;top:1px;width:17px;height:12px;background:#f0f0f0;border-right:1px solid #696969;border-bottom:1px solid #696969;box-shadow:inset 1px 1px #fff,inset -1px -1px #a0a0a0"></div><div class="a" style="left:1263.5px;top:1px;width:16px;height:12px;background:#f0f0f0;border-right:1px solid #696969;border-bottom:1px solid #696969;box-shadow:inset 1px 1px #fff,inset -1px -1px #a0a0a0"><div class="a" style="left:6.5px;top:2.5px;border-top:3px solid transparent;border-bottom:3px solid transparent;border-left:3px solid #000"></div></div></div>
<div id="status" class="a"><div class="a" style="left:0;top:0;width:1280px;height:1px;background:#a0a0a0"></div><div class="p" style="left:0px;width:201px"><span class="a" style="left:52px;top:1.5px">Undo память : 0 Kb.</span></div><div class="p" style="left:201px;width:200px"><span class="a" style="left:44px;top:1.5px">Увел. расстояние: 0.10</span></div><div class="p" style="left:401px;width:300px"><span class="a" style="left:44px;top:1.5px">50 пов-сти, 123 кромки, 74 точки, 0 кривые</span></div><div class="a" style="left:0;top:14px;width:1280px;height:1px;background:#fff"></div></div>
<div id="task" class="a"><div class="a" style="left:0;top:0;width:1280px;height:31px;background:linear-gradient(90deg,#6a6e74 0,#50535a 10px,#5a5c60 50px,#6c6c6e 110px,#7a7878 150px,#6e6c6c 200px,#5c5b5c 240px,#6a6a6a 280px,#7a7c80 424px,#8494a8 460px,#8a96a4 500px,#8c8a8a 560px,#868484 640px,#7a7878 720px,#7c7876 800px,#84888e 880px,#7a7674 920px,#6e6a68 1000px,#5e5a58 1060px,#5a5856 1140px,#56524f 1220px,#5a5856 1280px)"></div><div class="a" style="left:0;top:0;width:1280px;height:31px;background:linear-gradient(180deg,rgba(255,255,255,.10) 0,rgba(255,255,255,.04) 45%,rgba(0,0,0,.06) 100%)"></div><div class="a" style="left:0;top:0;width:1280px;height:1px;background:#1e1e1e"></div><div class="a" style="left:0;top:1px;width:1280px;height:1px;background:rgba(255,255,255,.25)"></div><div class="a" style="left:60px;top:2px;width:42px;height:28px;border-radius:3px;border:1px solid rgba(230,230,230,.75);box-shadow:0 0 0 1px rgba(0,0,0,.35);background:linear-gradient(180deg,#a8a8aa,#6e6e70)"></div><div class="a" style="left:290px;top:2px;width:42px;height:28px;border-radius:3px;border:1px solid rgba(230,230,230,.75);box-shadow:0 0 0 1px rgba(0,0,0,.35);background:linear-gradient(180deg,#e0e0e0,#a8a8a8)"></div><div class="a" style="left:336px;top:2px;width:42px;height:28px;border-radius:3px;border:1px solid rgba(230,230,230,.75);box-shadow:0 0 0 1px rgba(0,0,0,.35);background:linear-gradient(180deg,#b4b4b4,#7e7e7e)"></div><div class="a" style="left:382px;top:2px;width:42px;height:28px;border-radius:3px;border:1px solid rgba(230,230,230,.75);box-shadow:0 0 0 1px rgba(0,0,0,.35);background:linear-gradient(180deg,#bcc4cc,#8a96a4)"></div><svg class="a" style="left:9px;top:-4px" width="36" height="36" viewBox="0 0 36 36"><defs><linearGradient id="orb" x1="0" y1="0" x2="0" y2="1"><stop offset="0" stop-color="#a8c4dc"/><stop offset="0.45" stop-color="#4a86b8"/><stop offset="0.55" stop-color="#1a4a88"/><stop offset="1" stop-color="#0a3a78"/></linearGradient><radialGradient id="orb2" cx="50%" cy="100%" r="45%"><stop offset="0" stop-color="#40f0ff"/><stop offset="1" stop-color="#40e0ff" stop-opacity="0"/></radialGradient></defs><circle cx="18" cy="18" r="17.5" fill="url(#orb)" stroke="#12304a" stroke-width="1"/><circle cx="18" cy="18" r="17" fill="url(#orb2)"/><path d="M9 10 Q13 7.5 19 9.5 L17.5 17 Q13 15.5 8 17 Z" fill="#e8502a"/><path d="M20 10 Q24 12 29.5 10.5 L28 18.5 Q23 20 18.5 18 Z" fill="#7ab838"/><path d="M7.5 18.5 Q12 17 17.5 18.5 L16 26.5 Q11 25 6 26.5 Z" fill="#38a0e8"/><path d="M18.5 19.5 Q23 21 28 19.5 L26.5 27.5 Q22 29 17 27 Z" fill="#f8c028"/></svg><svg class="a" style="left:71px;top:6px" width="20" height="19" viewBox="0 0 20 19"><path d="M5 10.5 H15.6 A5.4 5.4 0 1 0 14.2 14.6" fill="none" stroke="#38a8e8" stroke-width="2.6"/><path d="M2.5 17.5 Q-0.5 14 6 8 Q13 1.5 17.5 2.5 Q19.5 4 16.5 7.5" fill="none" stroke="#f0b020" stroke-width="1.7"/></svg><svg class="a" style="left:119px;top:8px" width="16" height="16" viewBox="0 0 16 16"><circle cx="8" cy="8" r="7.4" fill="#f0a030" stroke="#3a2008" stroke-width="1.1"/><path d="M8 3.5 L4 11.5 H6 L8 7 L10 11.5 H12 Z" fill="#2a1808"/><circle cx="12" cy="12" r="1" fill="#2a1808"/></svg><svg class="a" style="left:164px;top:6px" width="18" height="15" viewBox="0 0 18 15"><rect x="7" y="1" width="10" height="13" rx="2" fill="#c8c8c8" stroke="#333" stroke-width=".8"/><rect x="13" y="4" width="2.5" height="6" fill="#111"/><circle cx="6" cy="7" r="5" fill="#e8e8e8" stroke="#222"/><circle cx="6" cy="7" r="2.2" fill="#777"/><circle cx="5" cy="6" r=".9" fill="#fff"/></svg><svg class="a" style="left:211px;top:7px" width="15" height="16" viewBox="0 0 15 16"><rect x="0.5" y="0.5" width="14" height="15" rx="1" fill="#2448b8" stroke="#18307a"/><rect x="3.5" y="1" width="7" height="5" fill="#e8e8e8"/><rect x="7" y="2" width="2" height="3" fill="#18307a"/><rect x="2" y="8.5" width="11" height="7" fill="#fff"/><path d="M3 10.5 H12 M3 12.5 H12" stroke="#c04040"/><rect x="2" y="14" width="11" height="1.5" fill="#c03030"/></svg><svg class="a" style="left:257px;top:8px" width="16" height="16" viewBox="0 0 16 16"><ellipse cx="8" cy="3.4" rx="2.1" ry="3.1" fill="#38b818" stroke="#187010" stroke-width=".5" transform="rotate(0 8 8)"/><ellipse cx="8" cy="3.4" rx="2.1" ry="3.1" fill="#38b818" stroke="#187010" stroke-width=".5" transform="rotate(45 8 8)"/><ellipse cx="8" cy="3.4" rx="2.1" ry="3.1" fill="#38b818" stroke="#187010" stroke-width=".5" transform="rotate(90 8 8)"/><ellipse cx="8" cy="3.4" rx="2.1" ry="3.1" fill="#38b818" stroke="#187010" stroke-width=".5" transform="rotate(135 8 8)"/><ellipse cx="8" cy="3.4" rx="2.1" ry="3.1" fill="#38b818" stroke="#187010" stroke-width=".5" transform="rotate(180 8 8)"/><ellipse cx="8" cy="3.4" rx="2.1" ry="3.1" fill="#38b818" stroke="#187010" stroke-width=".5" transform="rotate(225 8 8)"/><ellipse cx="8" cy="3.4" rx="2.1" ry="3.1" fill="#38b818" stroke="#187010" stroke-width=".5" transform="rotate(270 8 8)"/><ellipse cx="8" cy="3.4" rx="2.1" ry="3.1" fill="#38b818" stroke="#187010" stroke-width=".5" transform="rotate(315 8 8)"/><ellipse cx="8" cy="3.4" rx="2.1" ry="3.1" fill="#d82020" stroke="#701010" stroke-width=".5" transform="rotate(247 8 8)"/><circle cx="8" cy="8" r="1.9" fill="#e8e030"/></svg><svg class="a" style="left:349px;top:8px" width="16" height="16" viewBox="0 0 16 16"><ellipse cx="8" cy="3.4" rx="2.1" ry="3.1" fill="#38b818" stroke="#187010" stroke-width=".5" transform="rotate(0 8 8)"/><ellipse cx="8" cy="3.4" rx="2.1" ry="3.1" fill="#38b818" stroke="#187010" stroke-width=".5" transform="rotate(45 8 8)"/><ellipse cx="8" cy="3.4" rx="2.1" ry="3.1" fill="#38b818" stroke="#187010" stroke-width=".5" transform="rotate(90 8 8)"/><ellipse cx="8" cy="3.4" rx="2.1" ry="3.1" fill="#38b818" stroke="#187010" stroke-width=".5" transform="rotate(135 8 8)"/><ellipse cx="8" cy="3.4" rx="2.1" ry="3.1" fill="#38b818" stroke="#187010" stroke-width=".5" transform="rotate(180 8 8)"/><ellipse cx="8" cy="3.4" rx="2.1" ry="3.1" fill="#38b818" stroke="#187010" stroke-width=".5" transform="rotate(225 8 8)"/><ellipse cx="8" cy="3.4" rx="2.1" ry="3.1" fill="#38b818" stroke="#187010" stroke-width=".5" transform="rotate(270 8 8)"/><ellipse cx="8" cy="3.4" rx="2.1" ry="3.1" fill="#38b818" stroke="#187010" stroke-width=".5" transform="rotate(315 8 8)"/><ellipse cx="8" cy="3.4" rx="2.1" ry="3.1" fill="#d82020" stroke="#701010" stroke-width=".5" transform="rotate(247 8 8)"/><circle cx="8" cy="8" r="1.9" fill="#e8e030"/></svg><svg class="a" style="left:302px;top:7px" width="18" height="17" viewBox="0 0 18 17"><path d="M2 6 Q2 1 8 1 Q13 1 14 5 L13 10 L8 13 L6 15 L3 12 Q2 10 2 6 Z" fill="#2a2a12"/><path d="M8 1 Q14 1 15 6 L14 10 L9 12 Z" fill="#d8d8a8"/><path d="M6 12 L9 15 L8 11 Z" fill="#6a1030"/><rect x="10" y="9" width="3" height="3" fill="#80b0d8"/><rect x="13" y="9" width="3" height="3" fill="#e8e8c0"/><rect x="10" y="12" width="3" height="3" fill="#e8e8c0"/><rect x="13" y="12" width="3" height="3" fill="#80b0d8"/></svg><svg class="a" style="left:395px;top:7px" width="17" height="16" viewBox="0 0 17 16"><path d="M8 2 Q1 2 1 8 Q1 14 7 14 Q9 14 8.5 12 Q8 10 10 10 Q13.5 10 13.5 7 Q13 2 8 2 Z" fill="#eef0f4" stroke="#8a98b0" stroke-width=".8"/><circle cx="4.5" cy="9" r="1.3" fill="#d03030"/><circle cx="5" cy="5.5" r="1.3" fill="#30a040"/><circle cx="8.5" cy="4.5" r="1.3" fill="#e0a020"/><circle cx="11" cy="7" r="1.3" fill="#3070d0"/><path d="M13.5 15 L14.5 3" stroke="#e89028" stroke-width="2.2"/><circle cx="14.6" cy="2.5" r="1.6" fill="#d08040"/></svg><div class="a" style="left:1043px;top:8px;font-size:11px;color:#fff">EN</div><svg class="a" style="left:1073px;top:14px" width="9" height="5" viewBox="0 0 9 5"><path d="M0 5 L4.5 0 L9 5 Z" fill="#e8e8e8"/></svg><svg class="a" style="left:1094px;top:9px" width="16" height="16" viewBox="0 0 16 16"><ellipse cx="8" cy="3.2" rx="2.5" ry="3.2" fill="#78c848" transform="rotate(0 8 8)"/><ellipse cx="8" cy="3.2" rx="2.5" ry="3.2" fill="#78c848" transform="rotate(40 8 8)"/><ellipse cx="8" cy="3.2" rx="2.5" ry="3.2" fill="#78c848" transform="rotate(80 8 8)"/><ellipse cx="8" cy="3.2" rx="2.5" ry="3.2" fill="#78c848" transform="rotate(120 8 8)"/><ellipse cx="8" cy="3.2" rx="2.5" ry="3.2" fill="#78c848" transform="rotate(160 8 8)"/><ellipse cx="8" cy="3.2" rx="2.5" ry="3.2" fill="#78c848" transform="rotate(200 8 8)"/><ellipse cx="8" cy="3.2" rx="2.5" ry="3.2" fill="#78c848" transform="rotate(240 8 8)"/><ellipse cx="8" cy="3.2" rx="2.5" ry="3.2" fill="#78c848" transform="rotate(280 8 8)"/><ellipse cx="8" cy="3.2" rx="2.5" ry="3.2" fill="#78c848" transform="rotate(320 8 8)"/><circle cx="8" cy="8" r="1.8" fill="#e8f040"/></svg><svg class="a" style="left:1118px;top:8px" width="16" height="16" viewBox="0 0 16 16"><circle cx="8" cy="8" r="7.5" fill="#20b020" stroke="#0a4a0a" stroke-width="1"/><path d="M1.5 8 Q8 2.5 14.5 8 Q8 13.5 1.5 8 Z" fill="#fff"/><circle cx="8" cy="8" r="2.8" fill="#1a7a1a"/><circle cx="8" cy="8" r="1" fill="#b0e0b0"/></svg><svg class="a" style="left:1142px;top:11px" width="16" height="12" viewBox="0 0 16 12"><path d="M0.5 8.5 h2.2 v3 h-2.2 z M3.9 6.5 h2.2 v5 h-2.2 z M7.3 4.5 h2.2 v7 h-2.2 z M10.7 2 h2.2 v9.5 h-2.2 z M14 0 h2 v11.5 h-2 z" fill="#fff" stroke="#222" stroke-width=".5"/></svg><svg class="a" style="left:1166px;top:6px" width="15" height="17" viewBox="0 0 15 17"><rect x="1" y="3" width="8" height="12" rx="1" fill="#fff" stroke="#111"/><rect x="2.5" y="1.5" width="6" height="2" fill="#fff" stroke="#111" stroke-width=".8"/><path d="M8 6 h6 v3 l-1.5 2 v2 h-3 v-2 l-1.5 -2 z" fill="#fff" stroke="#111"/><path d="M9.5 4 V6 M12.5 4 V6" stroke="#111" stroke-width="1.2"/><path d="M11 13 V17" stroke="#ddd" stroke-width="1.2"/></svg><div class="a" style="left:1213px;top:10px;font-size:12px;color:#fff;letter-spacing:-0.3px">19:47</div><div class="a" style="left:1266px;top:1px;width:14px;height:30px;border:1px solid rgba(255,255,255,.35);border-right:none;background:linear-gradient(90deg,rgba(255,255,255,.15),rgba(255,255,255,.05))"></div></div>
</body></html>
